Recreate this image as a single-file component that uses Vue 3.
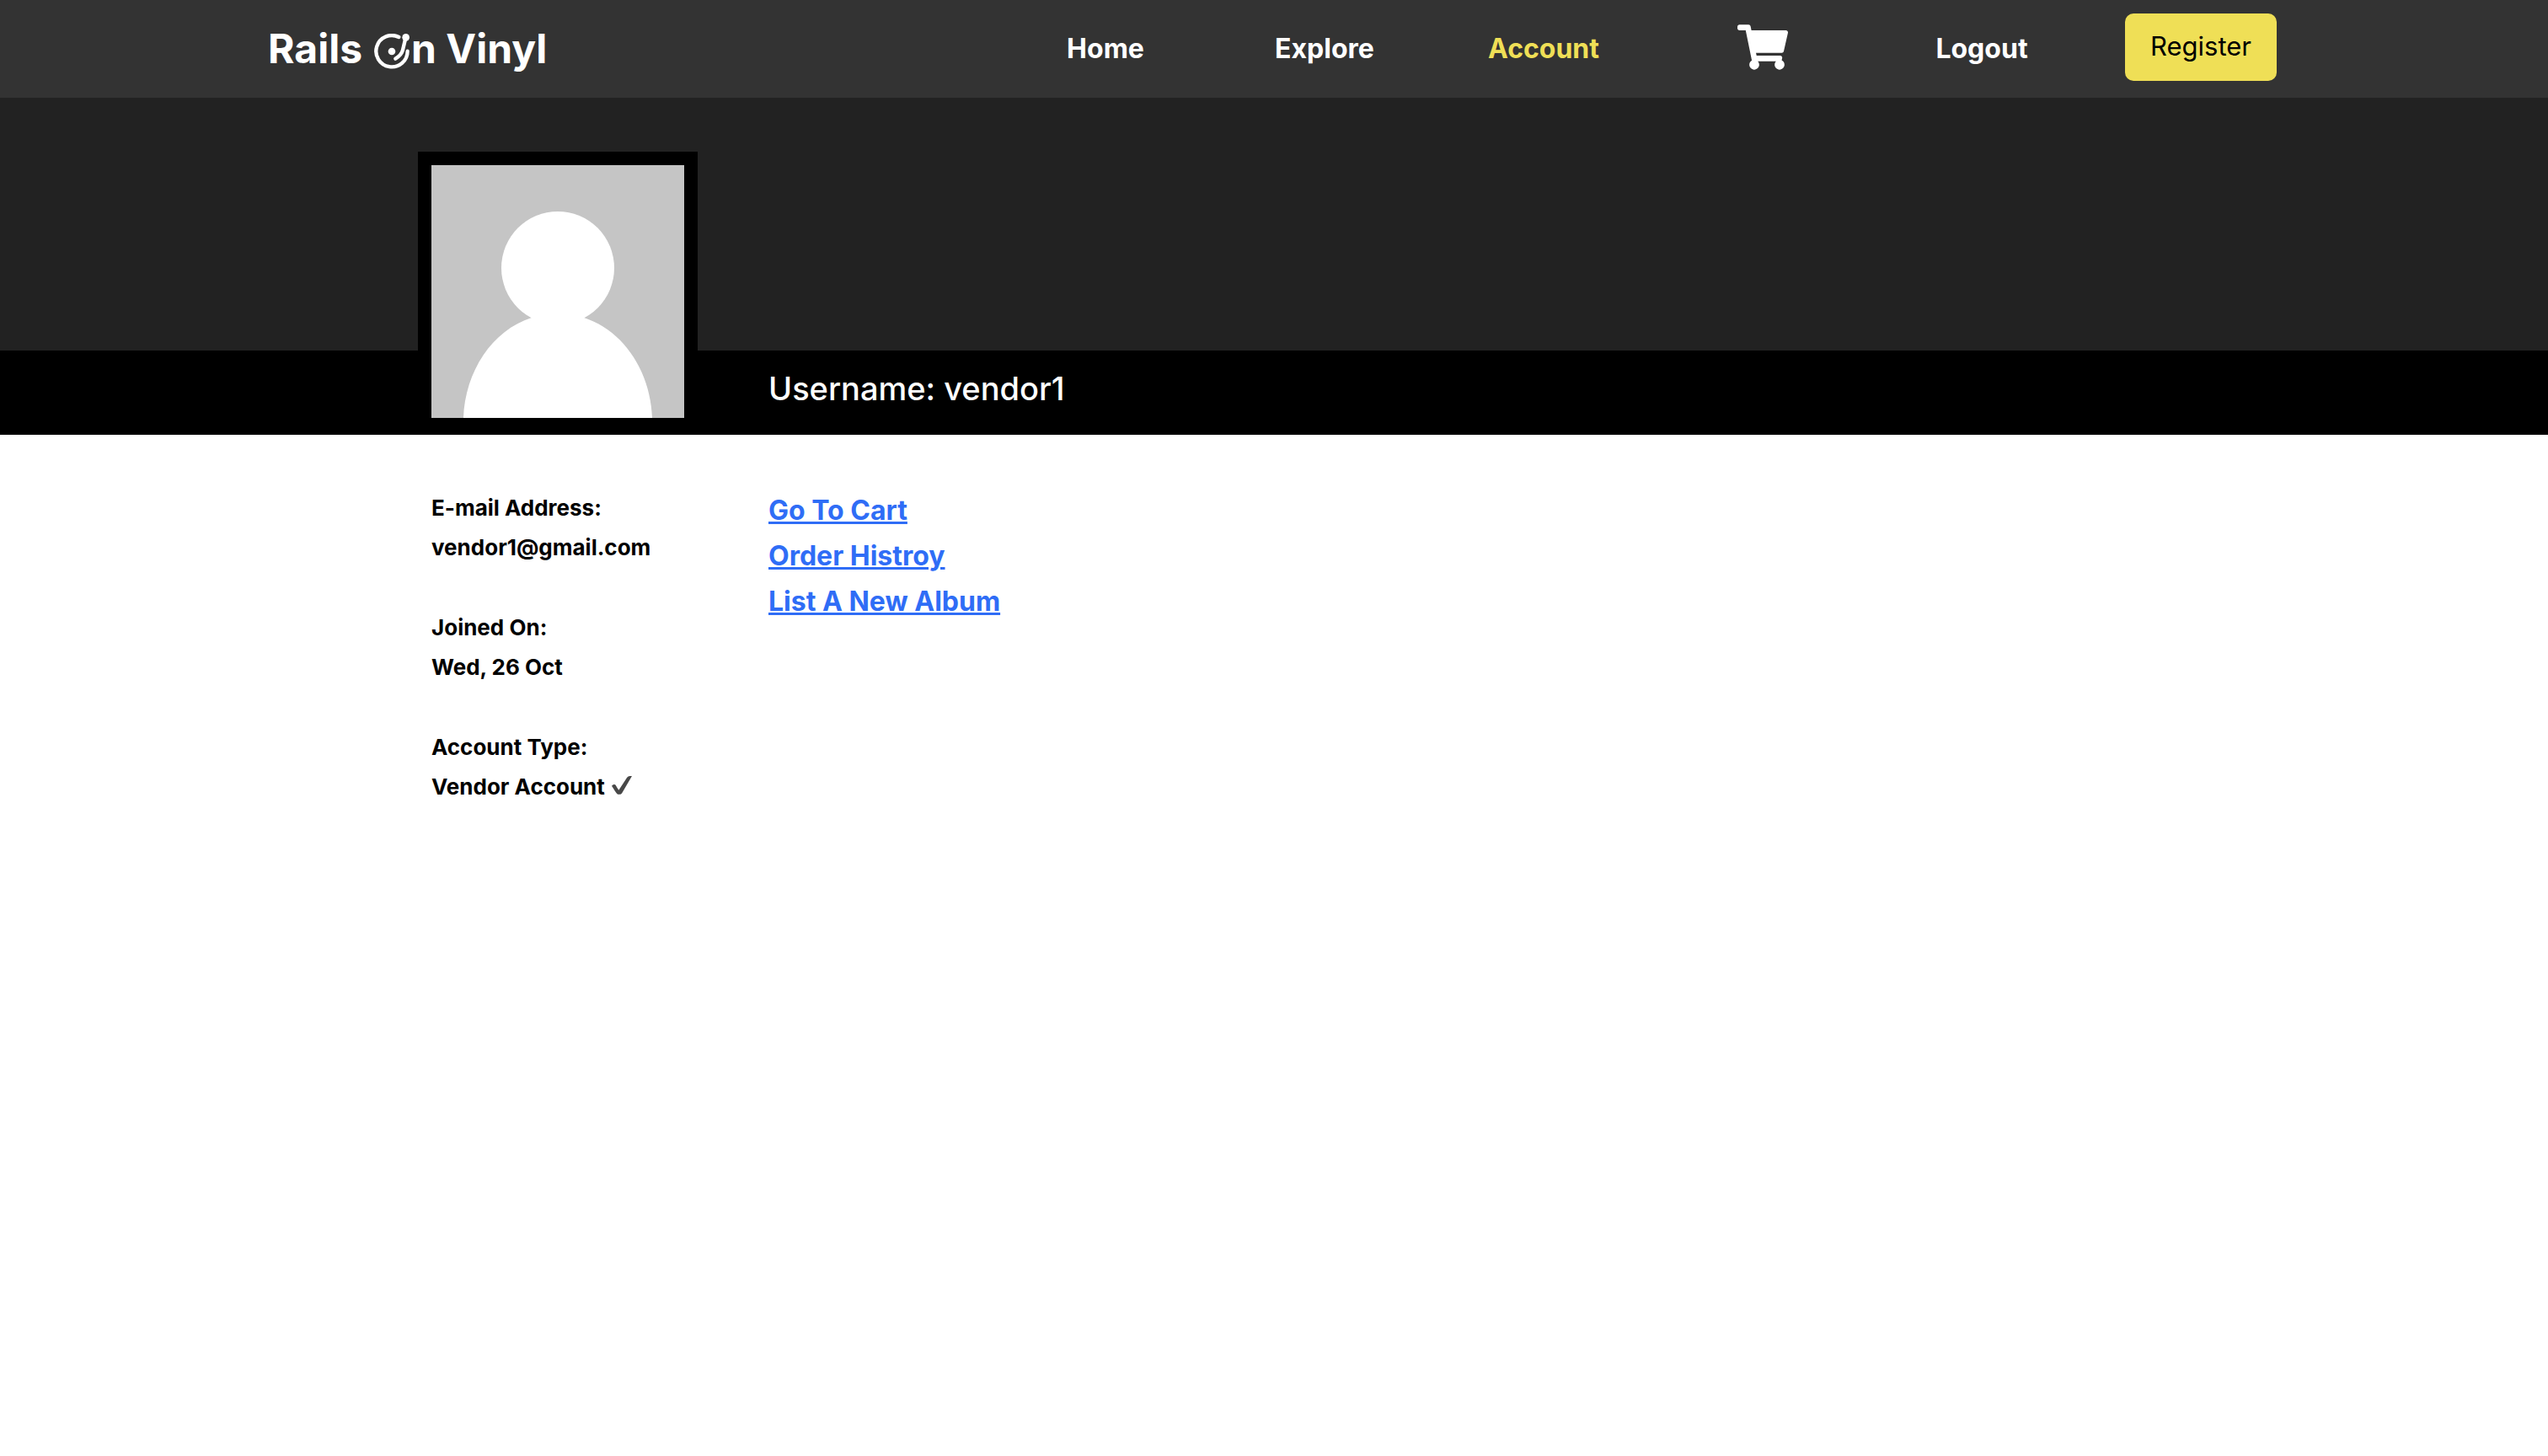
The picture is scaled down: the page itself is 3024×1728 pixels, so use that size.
<script setup>
const links = [
  { label: 'Home', href: '#home' },
  { label: 'Explore', href: '#explore' },
  { label: 'Account', href: '#account', active: true },
]

const details = [
  { term: 'E-mail Address:', value: 'vendor1@gmail.com' },
  { term: 'Joined On:', value: 'Wed, 26 Oct' },
  { term: 'Account Type:', value: 'Vendor Account', verified: true },
]

const actions = [
  { label: 'Go To Cart', href: '#cart' },
  { label: 'Order Histroy', href: '#orders' },
  { label: 'List A New Album', href: '#new-album' },
]
</script>

<template>
  <div class="page">
    <header class="topbar">
      <nav class="nav">
        <a class="brand" href="#home">
          <span>Rails</span>
          <span class="brand-tail">
            <svg class="brand-icon" viewBox="0 0 126 126" role="img" aria-label="O">
              <g fill="none" stroke="#fff" stroke-width="13" stroke-linecap="round">
                <path d="M88 12A56 56 0 1 0 119 62" />
                <path d="M113 12L102 58Q98 76 76 89" />
              </g>
              <circle cx="63" cy="63" r="13" fill="#fff" />
              <circle cx="113" cy="13" r="13" fill="#fff" />
            </svg>
            <span>n Vinyl</span>
          </span>
        </a>
        <a
          v-for="link in links"
          :key="link.label"
          class="nav-link"
          :class="{ active: link.active }"
          :href="link.href"
        >{{ link.label }}</a>
        <a class="cart-link" href="#cart" aria-label="Cart">
          <svg class="cart-icon" viewBox="0 0 576 512" aria-hidden="true">
            <path
              fill="currentColor"
              d="M528.12 301.319l47.273-208C578.806 78.301 567.391 64 551.99 64H159.208l-9.166-44.81C147.758 8.021 137.93 0 126.529 0H24C10.745 0 0 10.745 0 24v16c0 13.255 10.745 24 24 24h69.883l70.248 343.435C147.325 417.1 136 435.222 136 456c0 30.928 25.072 56 56 56s56-25.072 56-56c0-15.674-6.447-29.835-16.824-40h209.647C430.447 426.165 424 440.326 424 456c0 30.928 25.072 56 56 56s56-25.072 56-56c0-22.172-12.888-41.332-31.579-50.405l5.517-24.276c3.413-15.018-8.002-29.319-23.403-29.319H218.117l-6.545-32h293.145c11.206 0 20.92-7.754 23.403-18.681z"
            />
          </svg>
        </a>
        <a class="nav-link" href="#logout">Logout</a>
        <button class="register" type="button">Register</button>
      </nav>
    </header>

    <main>
      <div class="cover"></div>
      <section class="identity">
        <div class="container identity-row">
          <div class="avatar">
            <svg viewBox="0 0 300 300" role="img" aria-label="Profile picture">
              <rect width="300" height="300" fill="#c5c5c5" />
              <circle cx="150" cy="122" r="67" fill="#fff" />
              <path
                fill="#fff"
                d="M38 300C40 245 72 196 119 181L150 168L181 181C228 196 260 245 262 300Z"
              />
            </svg>
          </div>
          <h1 class="username">Username: vendor1</h1>
        </div>
      </section>

      <section class="container profile">
        <dl class="details">
          <div v-for="item in details" :key="item.term">
            <dt>{{ item.term }}</dt>
            <dd>
              {{ item.value }}
              <svg v-if="item.verified" class="check" viewBox="0 0 72 66" role="img" aria-label="Verified">
                <path
                  fill="#484848"
                  d="M0 35C4 30 11 28 14 32C17 38 21 44 25 50L54 6C57 1 63 0 72 0L37 60C34 67 22 67 18 62C12 54 6 44 0 35Z"
                />
              </svg>
            </dd>
          </div>
        </dl>
        <ul class="actions">
          <li v-for="action in actions" :key="action.label">
            <a :href="action.href">{{ action.label }}</a>
          </li>
        </ul>
      </section>
    </main>
  </div>
</template>

<style>
body {
  margin: 0;
  background: #fff;
}
</style>

<style scoped>
.page {
  font-family: Inter, "Liberation Sans", sans-serif;
  color: #000;
}

.topbar {
  background: #333;
}

.nav {
  display: grid;
  box-sizing: border-box;
  grid-template-columns: 45fr repeat(6, 13fr);
  align-items: center;
  justify-items: center;
  width: 82%;
  max-width: 2460px;
  min-height: 116px;
  margin: 0 auto;
  padding-bottom: 4px;
}

.brand {
  display: flex;
  align-items: center;
  justify-self: start;
  gap: 14px;
  padding: 4px 0 0 36px;
  color: #fff;
  font-size: 48px;
  font-weight: 700;
  line-height: 60px;
  text-decoration: none;
  white-space: nowrap;
}

.brand-tail {
  display: flex;
  align-items: center;
  gap: 2px;
}

.brand-icon {
  width: 42px;
  height: 42px;
  margin-top: 6px;
}

.nav-link {
  padding-top: 3px;
  color: #fff;
  font-size: 32px;
  font-weight: 700;
  line-height: 40px;
  text-decoration: none;
}

.nav-link.active {
  color: #efdf56;
}

.cart-link {
  color: #fff;
}

.cart-icon {
  display: block;
  width: 60px;
  height: 54px;
}

.register {
  height: 80px;
  padding: 0 30px 4px;
  border: 0;
  border-radius: 10px;
  background: #efdf56;
  color: #000;
  font-family: inherit;
  font-size: 31px;
}

.container {
  box-sizing: border-box;
  width: 100%;
  max-width: 2000px;
  margin: 0 auto;
}

.cover {
  height: 300px;
  background: #222;
}

.identity {
  background: #000;
}

.identity-row {
  display: flex;
  align-items: flex-end;
  gap: 84px;
  height: 100px;
}

.avatar {
  flex: none;
  width: 300px;
  margin: 0 0 4px -16px;
  border: 16px solid #000;
}

.avatar svg {
  display: block;
}

.username {
  margin: 0;
  padding-bottom: 29px;
  color: #fff;
  font-size: 38px;
  font-weight: 500;
  line-height: 52px;
}

.profile {
  display: flex;
  gap: 100px;
  padding-top: 63px;
}

.details {
  display: flex;
  flex-direction: column;
  flex: none;
  gap: 48px;
  width: 300px;
  margin: 0;
  font-size: 26px;
  font-weight: 700;
  line-height: 47px;
}

.details dd {
  margin: 0;
  white-space: nowrap;
}

.check {
  width: 24px;
  height: 22px;
  margin-left: 2px;
}

.actions {
  margin: 0;
  padding: 0;
  list-style: none;
  font-size: 32px;
  font-weight: 700;
  line-height: 54px;
}

.actions a {
  color: #2f6df6;
  text-decoration-thickness: 3px;
}
</style>
